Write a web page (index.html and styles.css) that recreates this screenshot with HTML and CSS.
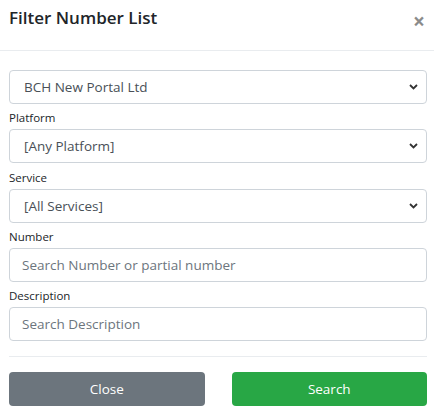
FILE: index.html
```html
<!DOCTYPE html>
<html>
<head>
<meta charset="utf-8">
<link rel="stylesheet" href="styles.css">
</head>
<body>
<div class="modal">
  <div class="modal-header">
    <h5 class="modal-title">Filter Number List</h5>
    <span class="close">×</span>
  </div>
  <div class="modal-body">
    <div class="select-wrap">
      <select class="form-control"><option>BCH New Portal Ltd</option></select>
      <svg class="chev" width="9" height="6" viewBox="0 0 9 6"><path d="M1 1l3.5 3.5L8 1" fill="none" stroke="#333" stroke-width="1.8"/></svg>
    </div>
    <label class="lbl">Platform</label>
    <div class="select-wrap">
      <select class="form-control"><option>[Any Platform]</option></select>
      <svg class="chev" width="9" height="6" viewBox="0 0 9 6"><path d="M1 1l3.5 3.5L8 1" fill="none" stroke="#333" stroke-width="1.8"/></svg>
    </div>
    <label class="lbl">Service</label>
    <div class="select-wrap">
      <select class="form-control"><option>[All Services]</option></select>
      <svg class="chev" width="9" height="6" viewBox="0 0 9 6"><path d="M1 1l3.5 3.5L8 1" fill="none" stroke="#333" stroke-width="1.8"/></svg>
    </div>
    <label class="lbl">Number</label>
    <input class="form-control input" type="text" placeholder="Search Number or partial number">
    <label class="lbl">Description</label>
    <input class="form-control input" type="text" placeholder="Search Description">
    <div class="divider"></div>
    <div class="buttons">
      <button class="btn btn-secondary">Close</button>
      <button class="btn btn-success">Search</button>
    </div>
  </div>
</div>
</body>
</html>
```

FILE: styles.css
```css
* { box-sizing: border-box; }
html, body { margin: 0; padding: 0; background: #fff; }
body {
  font-family: "Open Sans", "Liberation Sans", sans-serif;
  color: #212529;
  width: 434px;
  height: 416px;
  overflow: hidden;
}
.modal-header {
  display: flex;
  justify-content: space-between;
  align-items: flex-start;
  height: 51px;
  padding: 4px 9px 0 9px;
  border-bottom: 1px solid #e9ecef;
}
.modal-title {
  margin: 0;
  font-size: 17px;
  font-weight: 600;
  line-height: 28px;
  color: #212529;
}
.close {
  font-size: 21px;
  font-weight: 700;
  line-height: 34px;
  color: #000;
  opacity: 0.45;
  margin-right: 0;
}
.modal-body {
  padding: 19px 7px 0 9px;
  display: flex;
  flex-direction: column;
}
.select-wrap { position: relative; height: 34px; }
.form-control {
  display: block;
  width: 100%;
  height: 34px;
  flex: none;
  margin: 0;
  padding: 0 12px;
  font-family: inherit;
  font-size: 13.5px;
  color: #495057;
  background: #fff;
  border: 1px solid #ced4da;
  border-radius: 4px;
  outline: none;
}
select.form-control {
  -webkit-appearance: none;
  appearance: none;
  padding-left: 14px;
}
.input::placeholder { color: #6c757d; opacity: 1; }
.chev {
  position: absolute;
  right: 9px;
  top: 14px;
  pointer-events: none;
}
.lbl {
  display: block;
  font-size: 11.5px;
  line-height: 18px;
  height: 18px;
  margin: 5.25px 0 2px;
  color: #212529;
}
.divider {
  height: 1px;
  background: #e9ecef;
  margin-top: 15px;
}
.buttons {
  display: flex;
  gap: 27px;
  margin-top: 15px;
}
.btn {
  flex: 1;
  height: 34px;
  border: none;
  border-radius: 4px;
  color: #fff;
  font-family: inherit;
  font-size: 13.5px;
  font-weight: 400;
}
.btn-secondary { background: #6c757d; }
.btn-success { background: #28a745; }
```
